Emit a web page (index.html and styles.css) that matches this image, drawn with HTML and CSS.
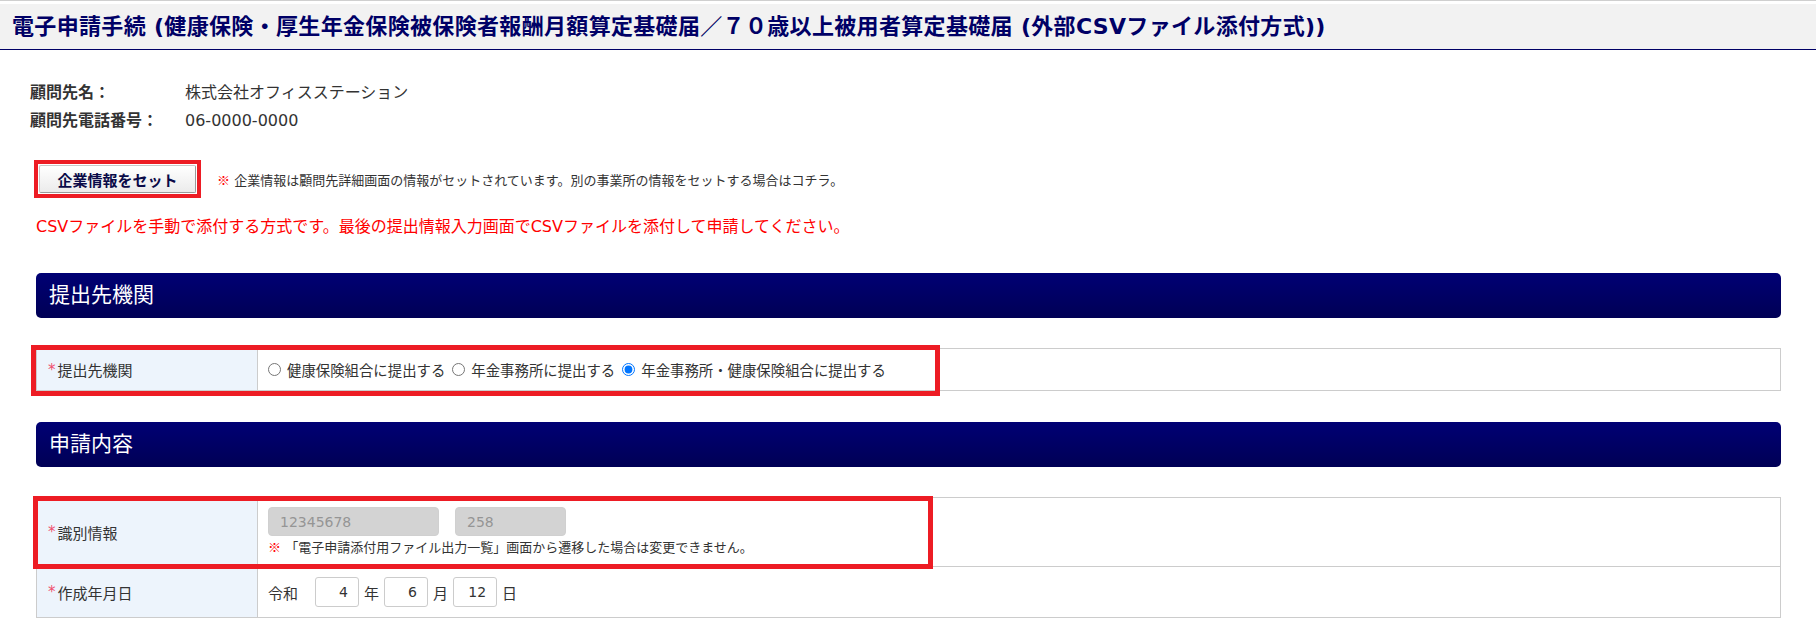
FILE: index.html
```html
<!DOCTYPE html>
<html lang="ja">
<head>
<meta charset="utf-8">
<title>電子申請手続</title>
<link rel="stylesheet" href="styles.css">
</head>
<body>
<header class="page-header">
  <h1 class="page-title">電子申請手続 (健康保険・厚生年金保険被保険者報酬月額算定基礎届／７０歳以上被用者算定基礎届 (外部CSVファイル添付方式))</h1>
</header>
<main class="content">
  <dl class="client-info">
    <div class="client-row"><dt>顧問先名：</dt><dd>株式会社オフィスステーション</dd></div>
    <div class="client-row"><dt>顧問先電話番号：</dt><dd>06-0000-0000</dd></div>
  </dl>

  <div class="company-set">
    <span class="annot-btn"><button type="button" class="btn-set">企業情報をセット</button></span>
    <p class="set-note"><span class="kome">※</span> 企業情報は顧問先詳細画面の情報がセットされています。別の事業所の情報をセットする場合はコチラ。</p>
  </div>

  <p class="csv-warning">CSVファイルを手動で添付する方式です。最後の提出情報入力画面でCSVファイルを添付して申請してください。</p>

  <section class="form-section first">
    <h2 class="section-head">提出先機関</h2>
    <div class="form-table">
      <div class="form-row row-dest">
        <div class="form-label"><span class="req">*</span>提出先機関</div>
        <div class="form-field radios">
          <label class="radio-opt"><input type="radio" name="dest">健康保険組合に提出する</label>
          <label class="radio-opt"><input type="radio" name="dest">年金事務所に提出する</label>
          <label class="radio-opt"><input type="radio" name="dest" checked>年金事務所・健康保険組合に提出する</label>
        </div>
      </div>
      <div class="annot annot-dest"></div>
    </div>
  </section>

  <section class="form-section second">
    <h2 class="section-head">申請内容</h2>
    <div class="form-table">
      <div class="form-row row-id">
        <div class="form-label"><span class="req">*</span>識別情報</div>
        <div class="form-field id-field">
          <div class="id-inputs">
            <input type="text" class="ro-input ro-long" value="12345678" disabled>
            <input type="text" class="ro-input ro-short" value="258" disabled>
          </div>
          <p class="id-note"><span class="kome">※</span> 「電子申請添付用ファイル出力一覧」画面から遷移した場合は変更できません。</p>
        </div>
      </div>
      <div class="form-row row-date">
        <div class="form-label"><span class="req">*</span>作成年月日</div>
        <div class="form-field date-field">
          <span class="era">令和</span>
          <input type="text" class="date-input" value="4">
          <span class="unit">年</span>
          <input type="text" class="date-input" value="6">
          <span class="unit">月</span>
          <input type="text" class="date-input" value="12">
          <span class="unit">日</span>
        </div>
      </div>
      <div class="annot annot-id"></div>
    </div>
  </section>
</main>
</body>
</html>
```
FILE: styles.css
```css
* {
  box-sizing: border-box;
}

html,
body {
  margin: 0;
  padding: 0;
  background: #ffffff;
}

body {
  font-family: "DejaVu Sans", "Noto Sans CJK JP", sans-serif;
  font-size: 16px;
  color: #333333;
}

/* ---------- page title ---------- */
.page-header {
  border-top: 1px solid #cfcfcf;
  padding-top: 3px;
}

.page-title {
  margin: 0;
  height: 46px;
  padding-left: 12px;
  background: #f2f2f2;
  border-bottom: 1px solid #000066;
  color: #000066;
  font-size: 22px;
  font-weight: bold;
  line-height: 45px;
  letter-spacing: 0.33px;
  white-space: nowrap;
}

/* ---------- content ---------- */
.content {
  padding: 0 35px 30px 30px;
}

.client-info {
  margin: 29px 0 0;
}

.client-row {
  display: flex;
  line-height: 28px;
}

.client-row dt {
  width: 155px;
  font-weight: bold;
}

.client-row dd {
  margin: 0;
}

.company-set {
  display: flex;
  align-items: center;
  margin-top: 25px;
  padding-left: 4px;
}

.annot-btn {
  display: inline-flex;
  padding: 1px;
  border: 4px solid #ed1c24;
}

.btn-set {
  width: 157px;
  height: 28px;
  padding: 0;
  font-family: "Noto Sans CJK JP", sans-serif;
  font-size: 15px;
  font-weight: bold;
  color: #0a0a48;
  background: linear-gradient(#ffffff, #ebebeb);
  border: 1px solid #c8c8c8;
  border-right-color: #9a9a9a;
  border-bottom-color: #9a9a9a;
  border-radius: 2px;
}

.set-note {
  margin: 0 0 0 16px;
  font-size: 13px;
}

.kome {
  color: #ff0000;
  font-weight: bold;
  font-family: "Noto Sans CJK JP", sans-serif;
}

.csv-warning {
  margin: 17px 0 0;
  padding-left: 6px;
  color: #ff0000;
  font-size: 16px;
  line-height: 24px;
}

/* ---------- sections ---------- */
.form-section {
  margin-left: 6px;
}

.form-section.first {
  margin-top: 34px;
}

.form-section.second {
  margin-top: 31px;
}

.section-head {
  margin: 0;
  height: 45px;
  padding-left: 13px;
  border-radius: 5px;
  background: linear-gradient(#000074, #000055);
  color: #ffffff;
  font-size: 21px;
  font-weight: normal;
  line-height: 45px;
}

.form-table {
  position: relative;
  margin-top: 30px;
  border: 1px solid #cccccc;
  border-bottom: none;
}

.form-row {
  display: grid;
  grid-template-columns: 221px 1fr;
  border-bottom: 1px solid #cccccc;
}

.form-label {
  display: flex;
  align-items: center;
  padding-left: 11px;
  background: #edf4fc;
  border-right: 1px solid #cccccc;
  font-size: 15px;
  color: #333333;
}

.req {
  color: #f0506e;
  margin-right: 2px;
}

.form-field {
  display: flex;
  align-items: center;
  padding: 0 10px;
}

.row-dest {
  min-height: 42px;
}

.radio-opt {
  display: inline-flex;
  align-items: center;
  margin-right: 7px;
  font-size: 14.4px;
}

.radio-opt input {
  width: 13px;
  height: 13px;
  margin: 0 6px 0 0;
}

.row-id {
  min-height: 67px;
}

.id-field {
  flex-direction: column;
  align-items: flex-start;
  justify-content: center;
  padding: 9px 10px 8px;
}

.id-inputs {
  display: flex;
  gap: 16px;
}

.ro-input {
  height: 29px;
  padding: 0 0 0 11px;
  background: #d3d3d3;
  border: 1px solid #d0d0d0;
  border-radius: 4px;
  color: #959595;
  font-family: "DejaVu Sans", sans-serif;
  font-size: 14px;
}

.ro-long {
  width: 171px;
}

.ro-short {
  width: 111px;
}

.id-note {
  margin: 0;
  font-size: 13px;
  line-height: 21px;
}

.row-date {
  min-height: 51px;
}

.date-field {
  font-size: 15px;
}

.era {
  margin-right: 17px;
}

.date-input {
  width: 44px;
  height: 30px;
  padding: 0 10px 0 0;
  border: 1px solid #cccccc;
  border-radius: 3px;
  background: #ffffff;
  color: #333333;
  text-align: right;
  font-family: "DejaVu Sans", sans-serif;
  font-size: 14px;
}

.unit {
  margin: 0 5px;
}

/* ---------- red annotation overlays ---------- */
.annot {
  position: absolute;
  border: 5px solid #ed1c24;
  pointer-events: none;
}

.annot-dest {
  left: -6px;
  top: -4px;
  width: 909px;
  height: 51px;
}

.annot-id {
  left: -4px;
  top: -2px;
  width: 900px;
  height: 73px;
}
```
